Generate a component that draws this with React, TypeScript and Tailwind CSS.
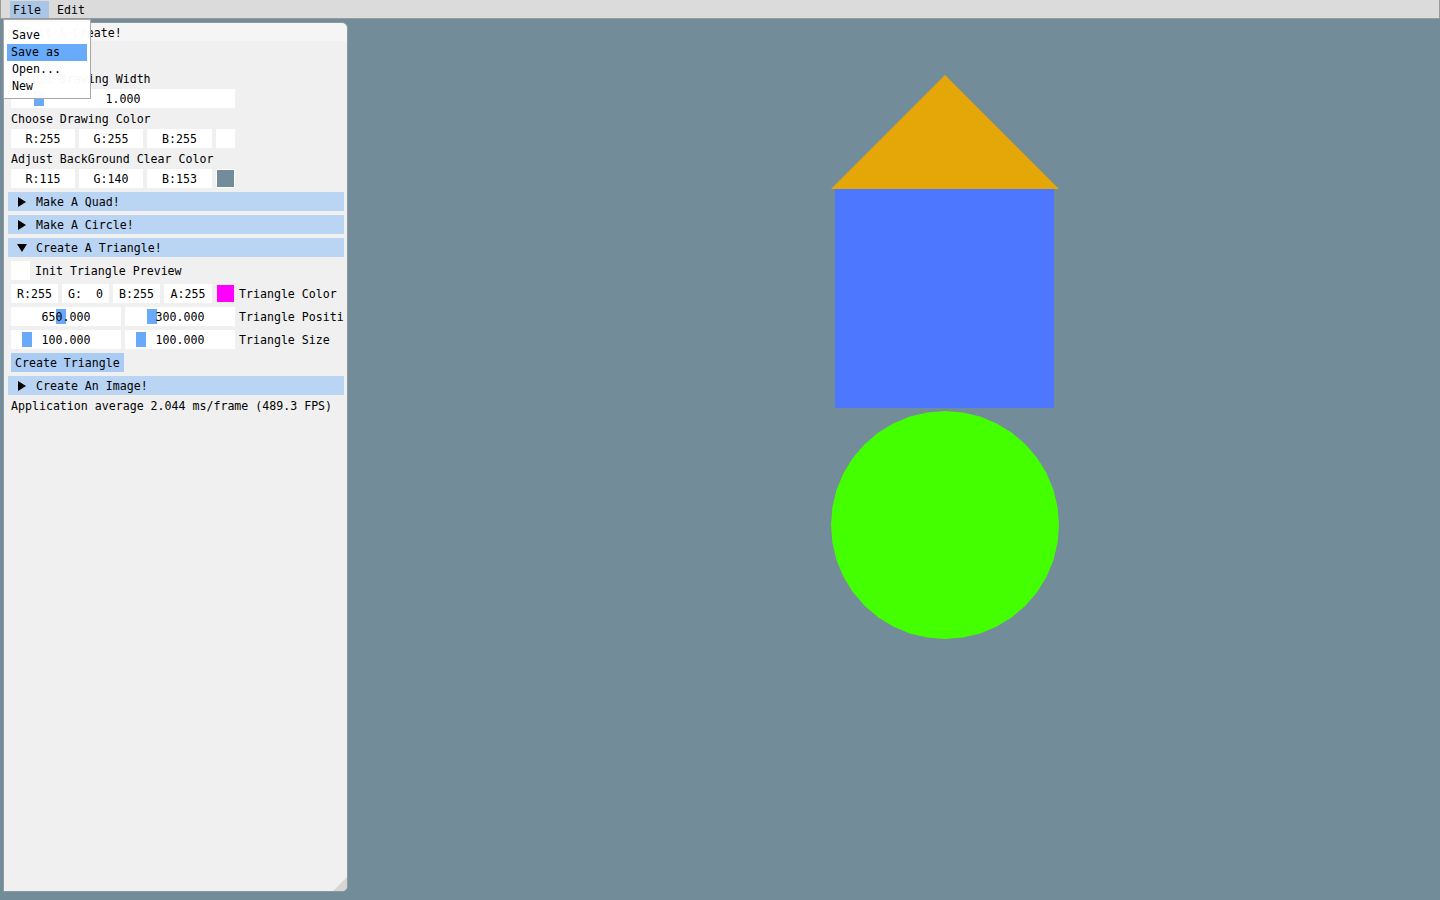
import React from "react";

const font = { fontFamily: '"DejaVu Sans Mono", "Liberation Mono", monospace' };

function Frame({ w, text }: { w: number; text: string }) {
  return (
    <div
      className="h-[19px] pt-[2px] bg-white flex items-center justify-center whitespace-pre shrink-0"
      style={{ width: w }}
    >
      {text}
    </div>
  );
}

function Slider({ w, grab, text }: { w: number; grab: number; text: string }) {
  return (
    <div className="relative h-[19px] pt-[2px] bg-white flex items-center justify-center shrink-0" style={{ width: w }}>
      <div className="absolute top-[2px] bottom-[2px] w-[10px] bg-[#6aa9f7]" style={{ left: grab }} />
      <span className="relative">{text}</span>
    </div>
  );
}

function Header({ label, open }: { label: string; open?: boolean }) {
  return (
    <div className="h-[19px] bg-[#bad4f3] flex items-center pl-[9px]">
      <div className="w-[9px] flex justify-center">
        {open ? (
          <div className="w-0 h-0 border-l-[5px] border-r-[5px] border-t-[8px] border-l-transparent border-r-transparent border-t-black" />
        ) : (
          <div className="w-0 h-0 border-t-[5px] border-b-[5px] border-l-[8px] border-t-transparent border-b-transparent border-l-black" />
        )}
      </div>
      <span className="ml-[10px] pt-[2px]">{label}</span>
    </div>
  );
}

function Text({ children }: { children: React.ReactNode }) {
  return <div className="h-[13px] leading-[15px] ml-[3px] whitespace-pre">{children}</div>;
}

function Row({ children, gap = "gap-[4px]" }: { children: React.ReactNode; gap?: string }) {
  return (
    <div className={`ml-[3px] h-[19px] flex items-center whitespace-nowrap overflow-hidden ${gap}`}>
      {children}
    </div>
  );
}

function Label({ children }: { children: React.ReactNode }) {
  return <span className="pt-[2px]">{children}</span>;
}

function Scene() {
  const pts = Array.from({ length: 40 }, (_, i) => {
    const a = (i / 40) * Math.PI * 2;
    return `${945 + Math.cos(a) * 114},${525 + Math.sin(a) * 114}`;
  }).join(" ");
  return (
    <svg className="absolute inset-0" width="1440" height="900">
      <polygon points="831,189 945,75 1059,189" fill="#e5a607" />
      <rect x="835" y="189" width="219" height="219" fill="#4e77ff" />
      <polygon points={pts} fill="#44ff00" />
    </svg>
  );
}

export default function App() {
  return (
    <div
      className="relative w-[1440px] h-[900px] bg-[#738c99] overflow-hidden text-[11.6px] leading-[15px] text-black"
      style={font}
    >
      <Scene />

      {/* menu bar */}
      <div className="relative h-[19px] bg-[#dbdbdb] border border-[#9a9a9a] border-t-0 flex items-center">
        <div className="ml-[9px] h-[17px] w-[39px] pl-[3px] pt-[2px] bg-[#abc6e5] flex items-center">File</div>
        <div className="ml-[8px] pt-[2px]">Edit</div>
      </div>

      {/* window */}
      <div className="absolute left-[3px] top-[22px] w-[345px] h-[870px] bg-[#f0f0f0] border border-[#8c989e] rounded-tr-[6px] rounded-br-[6px] rounded-tl-[2px] overflow-hidden">
        <div className="h-[18px] bg-[#f5f5f5] flex items-center pl-[8px] rounded-tr-[6px]">
          <div className="w-0 h-0 border-l-[4px] border-r-[4px] border-t-[7px] border-l-transparent border-r-transparent border-t-black" />
          <span className="ml-[4px] pt-[2px]">Edit &amp; Create!</span>
        </div>
        <div className="flex flex-col gap-[4px] pt-[8px] pl-[4px] pr-[3px]">
          <div className="h-[19px]" />
          <Text>Adjust Drawing Width</Text>
          <Row>
            <Slider w={224} grab={23} text="1.000" />
          </Row>
          <Text>Choose Drawing Color</Text>
          <Row>
            <Frame w={64} text="R:255" />
            <Frame w={64} text="G:255" />
            <Frame w={65} text="B:255" />
            <div className="w-[19px] h-[19px] bg-white" />
          </Row>
          <Text>Adjust BackGround Clear Color</Text>
          <Row>
            <Frame w={64} text="R:115" />
            <Frame w={64} text="G:140" />
            <Frame w={65} text="B:153" />
            <div className="w-[19px] h-[19px] bg-[#738c99] border border-white" />
          </Row>
          <Header label="Make A Quad!" />
          <Header label="Make A Circle!" />
          <Header label="Create A Triangle!" open />
          <Row gap="gap-[5px]">
            <div className="w-[19px] h-[19px] bg-white" />
            <Label>Init Triangle Preview</Label>
          </Row>
          <Row>
            <Frame w={47} text="R:255" />
            <Frame w={47} text="G:  0" />
            <Frame w={47} text="B:255" />
            <Frame w={48} text="A:255" />
            <div className="w-[19px] h-[19px] flex items-center justify-center shrink-0">
              <div className="w-[17px] h-[17px] bg-[#ff00ff]" />
            </div>
            <Label>Triangle Color</Label>
          </Row>
          <Row>
            <Slider w={110} grab={45} text="650.000" />
            <Slider w={110} grab={22} text="300.000" />
            <Label>Triangle Positi</Label>
          </Row>
          <Row>
            <Slider w={110} grab={11} text="100.000" />
            <Slider w={110} grab={11} text="100.000" />
            <Label>Triangle Size</Label>
          </Row>
          <Row>
            <div className="h-[19px] px-[4px] pt-[2px] bg-[#aaccf4] flex items-center">Create Triangle</div>
          </Row>
          <Header label="Create An Image!" />
          <Text>Application average 2.044 ms/frame (489.3 FPS)</Text>
        </div>
        <div className="absolute right-0 bottom-0 w-0 h-0 border-b-[14px] border-l-[14px] border-b-[#d6d6d6] border-l-transparent" />
      </div>

      {/* file menu popup */}
      <div className="absolute left-[3px] top-[19px] w-[88px] h-[80px] bg-white/[0.97] border border-[#a8a8a8] pt-[7px]">
        <div className="h-[17px] flex items-center pl-[8px]">Save</div>
        <div className="h-[17px] flex items-center pl-[4px] mx-[3px] bg-[#68abfb]">Save as</div>
        <div className="h-[17px] flex items-center pl-[8px]">Open...</div>
        <div className="h-[17px] flex items-center pl-[8px]">New</div>
      </div>
    </div>
  );
}
